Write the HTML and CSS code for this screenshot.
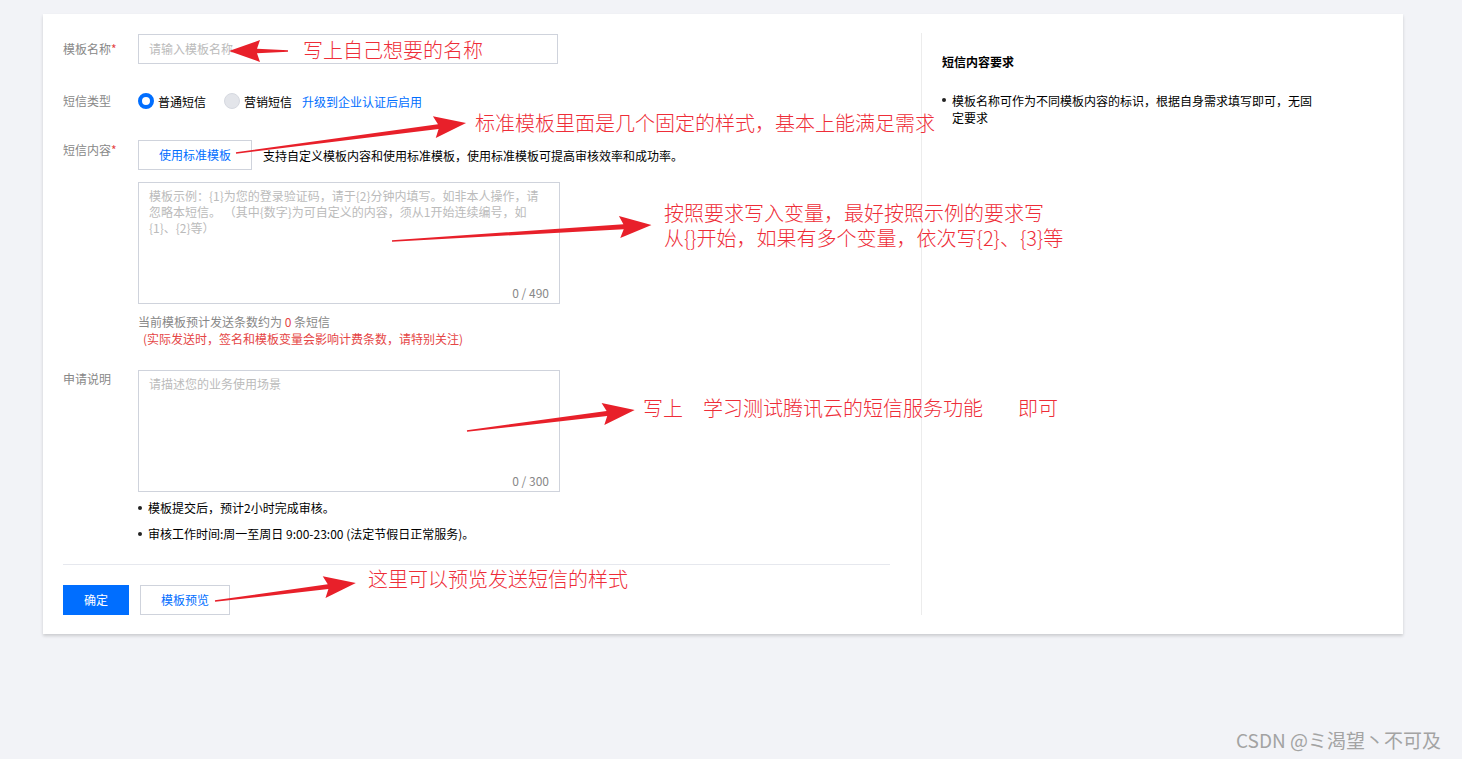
FILE: index.html
```html
<!DOCTYPE html>
<html lang="zh-CN">
<head>
<meta charset="utf-8">
<title>短信模板</title>
<link rel="stylesheet" href="styles.css">
</head>
<body>
<div class="page">
  <div class="card">
    <div class="form">
      <div class="row row-name">
        <div class="label lbl-name">模板名称<span class="req">*</span></div>
        <div class="field"><div class="input"><span class="ph">请输入模板名称</span></div></div>
      </div>
      <div class="row row-type">
        <div class="label">短信类型</div>
        <div class="field radios">
          <span class="radio checked"></span><span class="rtext">普通短信</span>
          <span class="radio off"></span><span class="rtext">营销短信</span>
          <a class="link">升级到企业认证后启用</a>
        </div>
      </div>
      <div class="row row-content">
        <div class="label lbl-content">短信内容<span class="req">*</span></div>
        <div class="field">
          <div class="std-line">
            <span class="btn-outline std-btn">使用标准模板</span>
            <span class="std-desc">支持自定义模板内容和使用标准模板，使用标准模板可提高审核效率和成功率。</span>
          </div>
          <div class="textarea">
            <div class="ph">模板示例：{1}为您的登录验证码，请于{2}分钟内填写。如非本人操作，请忽略本短信。 （其中{数字}为可自定义的内容，须从1开始连续编号，如<br>{1}、{2}等）</div>
            <span class="count">0 / 490</span>
          </div>
          <div class="estimate">当前模板预计发送条数约为 <span class="red">0</span> 条短信</div>
          <div class="warn">(实际发送时，签名和模板变量会影响计费条数，请特别关注)</div>
        </div>
      </div>
      <div class="row row-desc">
        <div class="label">申请说明</div>
        <div class="field">
          <div class="textarea">
            <div class="ph">请描述您的业务使用场景</div>
            <span class="count">0 / 300</span>
          </div>
          <ul class="tips">
            <li>模板提交后，预计2小时完成审核。</li>
            <li>审核工作时间:周一至周日 9:00-23:00 (法定节假日正常服务)。</li>
          </ul>
        </div>
      </div>
      <div class="divider"></div>
      <div class="actions">
        <span class="btn-primary">确定</span>
        <span class="btn-outline preview-btn">模板预览</span>
      </div>
    </div>
    <div class="side">
      <div class="side-title">短信内容要求</div>
      <ul class="side-list">
        <li>模板名称可作为不同模板内容的标识，根据自身需求填写即可，无固定要求</li>
      </ul>
    </div>
  </div>
</div>

<div class="notes">
  <svg class="arrows" width="1462" height="759" viewBox="0 0 1462 759">
    <g fill="#e8202a">
      <polygon transform="translate(288,51) rotate(180)" points="0,-0.8 31,-2.2 28,-11 59,0 28,11 31,2.2 0,0.8"/>
      <polygon transform="translate(236,153) rotate(-7.43)" points="0,-0.8 204,-2.4 200,-11 232,0 200,11 204,2.4 0,0.8"/>
      <polygon transform="translate(392,241) rotate(-3.52)" points="0,-0.8 232,-2.4 228,-11 260,0 228,11 232,2.4 0,0.8"/>
      <polygon transform="translate(467,431) rotate(-7.13)" points="0,-0.8 141,-2.4 137,-11 169,0 137,11 141,2.4 0,0.8"/>
      <polygon transform="translate(215,601) rotate(-7.27)" points="0,-0.8 114,-2.4 110,-11 142,0 110,11 114,2.4 0,0.8"/>
    </g>
  </svg>
  <div class="note n1">写上自己想要的名称</div>
  <div class="note n2">标准模板里面是几个固定的样式，基本上能满足需求</div>
  <div class="note n3">按照要求写入变量，最好按照示例的要求写</div>
  <div class="note n3b">从{}开始，如果有多个变量，依次写{2}、{3}等</div>
  <div class="note n4">写上　学习测试腾讯云的短信服务功能<span class="gap">即可</span></div>
  <div class="note n5">这里可以预览发送短信的样式</div>
  <div class="watermark">CSDN @ミ渴望丶不可及</div>
</div>
</body>
</html>
```

FILE: styles.css
```css
html, body {
  margin: 0;
  padding: 0;
}
body {
  background: #f2f3f7;
  font-family: "Noto Sans CJK SC", "Noto Sans", sans-serif;
  font-size: 12px;
  color: #000;
  width: 1462px;
  height: 759px;
  overflow: hidden;
  position: relative;
}
.page {
  padding: 14px 59px 0 43px;
}
.card {
  width: 1360px;
  height: 620px;
  background: #fff;
  display: flex;
  box-shadow: 0 2px 3px rgba(0, 0, 0, 0.16);
}
.form {
  width: 847px;
  padding: 20px 0 0 20px;
  box-sizing: border-box;
}
.row {
  display: grid;
  grid-template-columns: 75px 1fr;
}
.label {
  color: #888;
  line-height: 18px;
}
.req {
  color: #e54545;
}
.lbl-name { padding-top: 6px; }
.lbl-content { padding-top: 1px; }

.input {
  width: 420px;
  height: 30px;
  box-sizing: border-box;
  border: 1px solid #cfd3dc;
  padding: 0 10px;
  line-height: 28px;
}
.ph {
  color: #bbb;
}
.row-type {
  margin-top: 27px;
  align-items: center;
  height: 20px;
}
.radios {
  display: flex;
  align-items: center;
}
.radio {
  width: 16px;
  height: 16px;
  border-radius: 50%;
  box-sizing: border-box;
  flex: none;
}
.radio.checked {
  border: 4px solid #006eff;
  background: #fff;
}
.radio.off {
  background: #e3e5ea;
  border: 1px solid #d6d9e0;
}
.rtext {
  margin-left: 4px;
  margin-right: 18px;
}
.rtext + .radio + .rtext {
  margin-right: 10px;
}
.link {
  color: #006eff;
}
.row-content {
  margin-top: 29px;
}
.std-line {
  display: flex;
  align-items: center;
}
.btn-outline {
  display: inline-block;
  box-sizing: border-box;
  border: 1px solid #cfd3dc;
  color: #006eff;
  text-align: center;
  height: 30px;
  line-height: 28px;
  background: #fff;
}
.std-btn {
  width: 114px;
}
.std-desc {
  margin-left: 11px;
}
.textarea {
  position: relative;
  width: 422px;
  height: 122px;
  box-sizing: border-box;
  border: 1px solid #cfd3dc;
  padding: 5px 10px;
  line-height: 16px;
  margin-top: 12px;
}
.count {
  position: absolute;
  right: 10px;
  bottom: 2px;
  color: #888;
}
.estimate {
  margin-top: 9px;
  line-height: 17px;
  color: #888;
}
.red { color: #e54545; }
.warn {
  color: #e54545;
  line-height: 17px;
  padding-left: 5px;
}
.row-desc {
  margin-top: 23px;
}
.row-desc .textarea {
  margin-top: 0;
}
.tips {
  list-style: none;
  margin: 7px 0 0;
  padding: 0;
}
.tips li, .side-list li {
  position: relative;
  padding-left: 10px;
  line-height: 18px;
}
.tips li + li {
  margin-top: 8px;
}
.tips li::before, .side-list li::before {
  content: "";
  position: absolute;
  left: 0;
  top: 7px;
  width: 4px;
  height: 4px;
  border-radius: 50%;
  background: #222;
}
.divider {
  margin-top: 21px;
  height: 1px;
  background: #e6e8ee;
}
.actions {
  margin-top: 20px;
  display: flex;
  gap: 11px;
}
.btn-primary {
  display: inline-block;
  width: 66px;
  height: 30px;
  line-height: 30px;
  text-align: center;
  background: #006eff;
  color: #fff;
}
.preview-btn {
  width: 90px;
}
.side {
  margin: 19px 0 0 31px;
  height: 582px;
  border-left: 1px solid #ececec;
  padding: 20px 0 0 20px;
  box-sizing: border-box;
}
.side-title {
  font-weight: bold;
  line-height: 18px;
}
.side-list {
  list-style: none;
  margin: 21px 0 0;
  padding: 0;
  width: 372px;
}
.side-list li {
  line-height: 17px;
}
.side-list li::before {
  top: 6px;
}

.notes {
  position: absolute;
  left: 0;
  top: 0;
  width: 1462px;
  height: 759px;
  pointer-events: none;
}
.arrows {
  position: absolute;
  left: 0;
  top: 0;
}
.note {
  position: absolute;
  color: #ee2d38;
  font-size: 20px;
  line-height: 24px;
  font-weight: 300;
  white-space: nowrap;
}
.n1 { left: 303px; top: 38px; }
.n2 { left: 475px; top: 111px; }
.n3 { left: 664px; top: 202px; line-height: 22px; }
.n3b { left: 664px; top: 227px; line-height: 22px; }
.n4 { left: 643px; top: 396px; }
.n5 { left: 368px; top: 567px; }
.gap { margin-left: 35px; }
.watermark {
  position: absolute;
  left: 1236px;
  top: 728px;
  font-size: 19px;
  line-height: 24px;
  color: #a3a3a3;
  white-space: nowrap;
}
```
